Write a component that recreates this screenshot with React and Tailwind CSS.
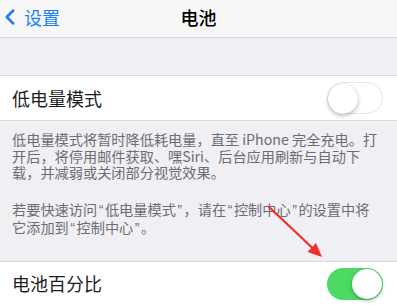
import { ChevronLeft } from 'lucide-react'

const font = { fontFamily: '"Noto Sans CJK SC", "Noto Sans", sans-serif' }

function Switch({ on }) {
  return (
    <div
      className={`relative h-[32px] w-[56px] rounded-full ${
        on ? 'bg-[#4cd964]' : 'border-[1.5px] border-[#e5e5ea] bg-white'
      }`}
    >
      <div
        className={`absolute top-[1px] h-[30px] w-[30px] rounded-full bg-white shadow-[0_2px_4px_rgba(0,0,0,0.25),0_0_1px_rgba(0,0,0,0.2)] ${
          on ? 'right-[1px]' : 'left-[0px] top-[0px]'
        }`}
      />
    </div>
  )
}

function Row({ label, on }) {
  return (
    <div className="flex h-[46px] items-center justify-between border-y border-[#d9d9dc] bg-white pl-[12px] pr-[14px]">
      <span className="text-[18px] text-[#1c1c1e]">{label}</span>
      <Switch on={on} />
    </div>
  )
}

// western curly quotes, narrow like the iOS font draws them
function Q({ children }) {
  return <span className="px-[1.5px] font-['Liberation_Sans',sans-serif]">{children}</span>
}

export default function App() {
  return (
    <main className="relative h-[305px] w-[397px] overflow-hidden bg-[#efeff4]" style={font}>
      <header className="relative flex h-[38px] items-center border-b border-[#d6d6da] bg-[#f7f7f8]">
        <div className="flex items-center pb-[3px] text-[#1a7ff5]">
          <ChevronLeft className="ml-[-3px] h-[28px] w-[26px]" strokeWidth={2.3} />
          <span className="ml-[1px] text-[18px]">设置</span>
        </div>
        <h1 className="absolute left-0 right-0 top-[4px] text-center text-[18px] font-medium text-black">电池</h1>
      </header>

      <div className="h-[37px]" />

      <Row label="低电量模式" on={false} />

      <div className="pb-[24px] pl-[12px] pr-[16px] pt-[10px] text-[14.2px] leading-[16.7px] text-[#6d6d72]">
        <p>低电量模式将暂时降低耗电量，直至 iPhone 完全充电。打开后，将停用邮件获取、嘿Siri、后台应用刷新与自动下载，并减弱或关闭部分视觉效果。</p>
        <p className="mt-[20px]">
          若要快速访问<Q>“</Q>低电量模式<Q>”</Q>，请在<Q>“</Q>控制中心<Q>”</Q>的设置中将它添加到<Q>“</Q>控制中心<Q>”</Q>。
        </p>
      </div>

      <Row label="电池百分比" on={true} />

      <svg className="pointer-events-none absolute left-0 top-0" width="397" height="305">
        <line x1="269" y1="207" x2="313" y2="248.5" stroke="#ef2f2a" strokeWidth="2.2" strokeLinecap="round" />
        <polygon points="322,257 307.5,252 316,243" fill="#ef2f2a" />
      </svg>
    </main>
  )
}
